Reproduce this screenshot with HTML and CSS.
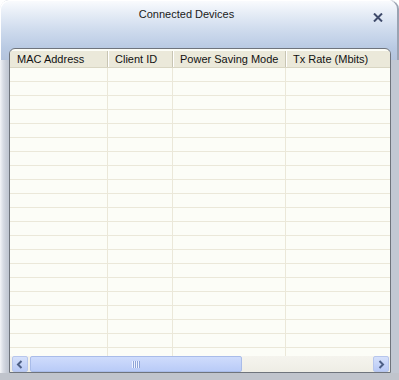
FILE: index.html
```html
<!DOCTYPE html>
<html lang="en">
<head>
    <meta charset="UTF-8">
    <title>Connected Devices</title>
    <link rel="stylesheet" href="styles.css">
</head>
<body>

    <div class="window">
        <div class="titlebar">
            <span class="title">Connected Devices</span>
            <span class="close">
                <svg width="10" height="9" viewBox="0 0 10 9">
                    <path d="M1 0.5 L9 8.5 M9 0.5 L1 8.5" stroke="#3f4b6b" stroke-width="2" fill="none"/>
                </svg>
            </span>
        </div>

        <div class="panel">
            <div class="grid">
                <div class="row head">
                    <div class="cell c1">MAC Address</div>
                    <div class="cell c2">Client ID</div>
                    <div class="cell c3">Power Saving Mode</div>
                    <div class="cell c4">Tx Rate (Mbits)</div>
                </div>
                <div id="rows"></div>
            </div>

            <div class="hscroll">
                <div class="sbtn">
                    <svg width="8" height="9" viewBox="0 0 8 9"><path d="M5.5 1 L2 4.5 L5.5 8" stroke="#4d5f85" stroke-width="2" fill="none"/></svg>
                </div>
                <div class="thumb"><span class="grip"></span></div>
                <div class="track"></div>
                <div class="sbtn">
                    <svg width="8" height="9" viewBox="0 0 8 9"><path d="M2.5 1 L6 4.5 L2.5 8" stroke="#4d5f85" stroke-width="2" fill="none"/></svg>
                </div>
            </div>
        </div>
    </div>

    <script>
        // filas vacías de la tabla
        const rows = document.getElementById('rows');
        for (let i = 0; i < 21; i++) {
            rows.innerHTML += '<div class="row"><div class="cell c1"></div><div class="cell c2"></div><div class="cell c3"></div><div class="cell c4"></div></div>';
        }
    </script>

</body>
</html>
```

FILE: styles.css
```css
body {
    margin: 0;
    font-family: "Liberation Sans", Arial, sans-serif;
    font-size: 11px;
    background: #ffffff;
}

.window {
    width: 399px;
    height: 380px;
    box-sizing: border-box;
    display: flex;
    flex-direction: column;
    border-radius: 9px 9px 0 0;
    background: linear-gradient(to right, #f4f5f8 0px, #d9dde5 3px, #c9ced8 6px, #c2c8d3 8px);
    padding: 0 8px 7px 9px;
    position: relative;
    overflow: hidden;
    box-shadow: inset 0 -7px 0 #c0c4cc;
}

.window::before {
    content: "";
    position: absolute;
    left: 0;
    top: 0;
    right: 0;
    height: 60px;
    border-radius: 9px 9px 0 0;
    background: linear-gradient(to bottom, #fbfcfe 0px, #e5ecf6 14px, #ccd9ec 32px, #b9cae3 48px, #b4c4dd 60px);
    box-shadow: inset 1px 1px 0 #ffffff, inset -2px 0 0 #9aa3b2;
}

.titlebar {
    height: 48px;
    display: flex;
    justify-content: center;
    padding-right: 27px;
    position: relative;
    z-index: 1;
}

.title {
    margin-top: 8px;
    color: #1a1a1a;
}

.close {
    position: absolute;
    right: 8px;
    top: 12px;
    width: 10px;
    height: 9px;
}

.panel {
    flex: 1;
    position: relative;
    z-index: 1;
    background: #fcfdf7;
    border: 1px solid #6f747c;
    border-radius: 6px 6px 0 0;
    display: flex;
    flex-direction: column;
    overflow: hidden;
    padding-top: 2px;
}

.grid {
    flex: 1;
    overflow: hidden;
}

.row {
    display: flex;
    height: 14px;
    border-bottom: 1px solid #ebe8d9;
    box-sizing: border-box;
}

.cell {
    border-right: 1px solid #ebe8d9;
    box-sizing: border-box;
    white-space: nowrap;
}

.c1 { width: 98px; }
.c2 { width: 65px; }
.c3 { width: 113px; }
.c4 { flex: 1; border-right: none; }

.row.head {
    height: 17px;
    background: #ebe9da;
    border-bottom: 1px solid #d9d6c3;
}

.head .cell {
    padding: 2px 0 0 7px;
    color: #111111;
    border-right: 1px solid #c8c5b3;
    box-shadow: inset 1px 0 0 #ffffff;
}

.head .c1 {
    box-shadow: none;
}

.head .c4 {
    border-right: none;
}

.hscroll {
    height: 16px;
    display: flex;
    padding: 0 1px 0 2px;
    background: linear-gradient(to bottom, #f5f4ee, #eeede5);
}

.sbtn {
    width: 16px;
    height: 16px;
    box-sizing: border-box;
    border: 1px solid #b7c6ec;
    border-radius: 2px;
    background: linear-gradient(to bottom, #d6e1fb, #b8c9f5);
    display: flex;
    align-items: center;
    justify-content: center;
}

.thumb {
    width: 212px;
    margin-left: 2px;
    height: 16px;
    box-sizing: border-box;
    border: 1px solid #a9bce9;
    border-radius: 2px;
    background: linear-gradient(to bottom, #cfdcfc, #b9cbf7);
    display: flex;
    align-items: center;
    justify-content: center;
}

.grip {
    width: 8px;
    height: 7px;
    background: repeating-linear-gradient(to right, #eef3ff 0 1px, #8ea5d8 1px 2px);
}

.track {
    flex: 1;
}
```
